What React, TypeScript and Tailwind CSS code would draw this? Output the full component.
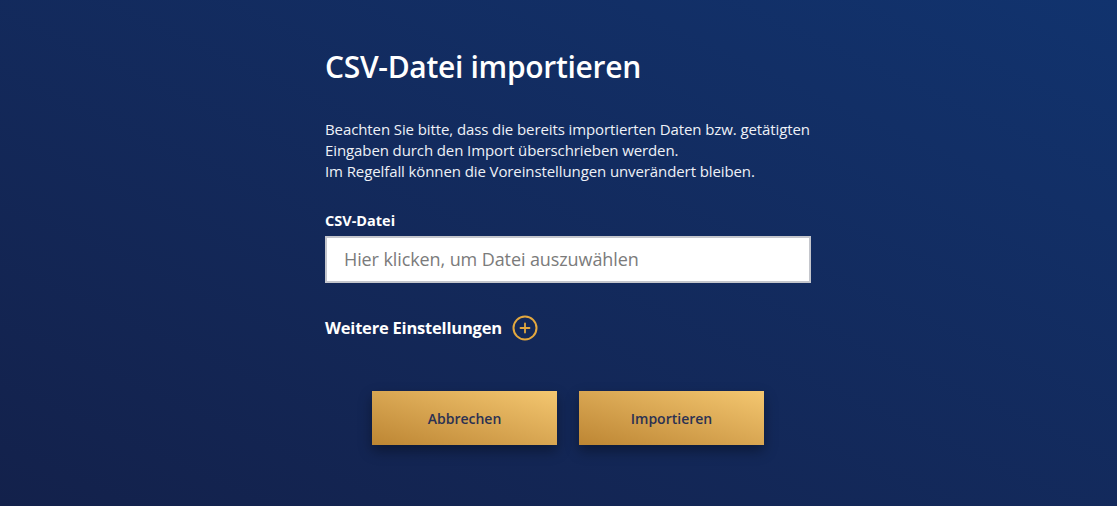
import React from "react";

export default function App() {
  return (
    <div
      className="w-[1117px] h-[506px] bg-gradient-to-tr from-[#13214b] to-[#11336e] text-white flex pl-[325px]"
      style={{ fontFamily: '"Open Sans", "Noto Sans", sans-serif' }}
    >
      <div className="w-[486px] pt-[47px] flex flex-col">
        <h1 className="text-[30px] leading-[40px] font-semibold tracking-[-0.3px]">CSV-Datei importieren</h1>
        <p className="mt-[32px] text-[15px] leading-[21px] font-medium tracking-[-0.1px] whitespace-nowrap text-[#eef1f7]">
          Beachten Sie bitte, dass die bereits importierten Daten bzw. getätigten
          <br />
          Eingaben durch den Import überschrieben werden.
          <br />
          Im Regelfall können die Voreinstellungen unverändert bleiben.
        </p>
        <label className="mt-[30px] text-[14.5px] leading-[18px] font-bold">CSV-Datei</label>
        <div className="mt-[6px] h-[47px] bg-white border-2 border-[#c4c6cc] flex items-center pl-[17px]">
          <span className="text-[18px] font-medium text-[#7b7b7b] tracking-[-0.1px]">
            Hier klicken, um Datei auszuwählen
          </span>
        </div>
        <div className="mt-[32px] flex items-center gap-[10px]">
          <span className="text-[16.5px] font-bold tracking-[-0.2px]">Weitere Einstellungen</span>
          <svg width="26" height="26" viewBox="0 0 26 26" fill="none">
            <circle cx="13" cy="13" r="11.5" stroke="#e3a83f" strokeWidth="2" />
            <path d="M13 8.5v9M8.5 13h9" stroke="#e3a83f" strokeWidth="1.8" strokeLinecap="round" />
          </svg>
        </div>
        <div className="mt-[50px] flex justify-center gap-[22px]">
          <button className="w-[185px] h-[54px] bg-gradient-to-tr from-[#bd8633] to-[#f4c770] text-[#2b3152] text-[14px] font-semibold shadow-[0_6px_12px_rgba(0,0,0,0.35)]">
            Abbrechen
          </button>
          <button className="w-[185px] h-[54px] bg-gradient-to-tr from-[#bd8633] to-[#f4c770] text-[#2b3152] text-[14px] font-semibold shadow-[0_6px_12px_rgba(0,0,0,0.35)]">
            Importieren
          </button>
        </div>
      </div>
    </div>
  );
}
